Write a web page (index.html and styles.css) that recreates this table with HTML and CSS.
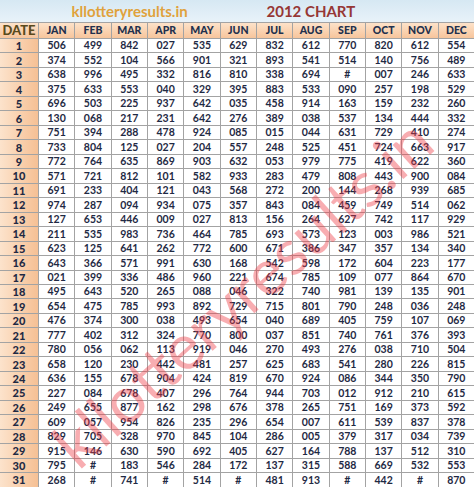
FILE: index.html
```html
<!DOCTYPE html>
<html lang="en">
<head>
<meta charset="utf-8">
<title>2012 Chart</title>
<link rel="stylesheet" href="styles.css">
</head>
<body>
<div class="sheet">
  <div class="title">
    <span class="site">kllotteryresults.in</span>
    <span class="chart">2012 CHART</span>
  </div>
  <div class="grid">
    <b class="hd date">DATE</b><b class="hd">JAN</b><b class="hd">FEB</b><b class="hd">MAR</b><b class="hd">APR</b><b class="hd">MAY</b><b class="hd">JUN</b><b class="hd">JUL</b><b class="hd">AUG</b><b class="hd">SEP</b><b class="hd">OCT</b><b class="hd">NOV</b><b class="hd">DEC</b>
    <b class="d">1</b><span>506</span><span>499</span><span>842</span><span>027</span><span>535</span><span>629</span><span>832</span><span>612</span><span>770</span><span>820</span><span>612</span><span>554</span>
    <b class="d">2</b><span>374</span><span>552</span><span>104</span><span>566</span><span>901</span><span>321</span><span>893</span><span>541</span><span>514</span><span>140</span><span>756</span><span>489</span>
    <b class="d">3</b><span>638</span><span>996</span><span>495</span><span>332</span><span>816</span><span>810</span><span>338</span><span>694</span><span>#</span><span>007</span><span>246</span><span>633</span>
    <b class="d">4</b><span>375</span><span>633</span><span>553</span><span>040</span><span>329</span><span>395</span><span>883</span><span>533</span><span>090</span><span>257</span><span>198</span><span>529</span>
    <b class="d">5</b><span>696</span><span>503</span><span>225</span><span>937</span><span>642</span><span>035</span><span>458</span><span>914</span><span>163</span><span>159</span><span>232</span><span>260</span>
    <b class="d">6</b><span>130</span><span>068</span><span>217</span><span>231</span><span>642</span><span>276</span><span>389</span><span>038</span><span>537</span><span>134</span><span>444</span><span>332</span>
    <b class="d">7</b><span>751</span><span>394</span><span>288</span><span>478</span><span>924</span><span>085</span><span>015</span><span>044</span><span>631</span><span>729</span><span>410</span><span>274</span>
    <b class="d">8</b><span>733</span><span>804</span><span>125</span><span>027</span><span>204</span><span>557</span><span>248</span><span>525</span><span>451</span><span>724</span><span>663</span><span>917</span>
    <b class="d">9</b><span>772</span><span>764</span><span>635</span><span>869</span><span>903</span><span>632</span><span>053</span><span>979</span><span>775</span><span>419</span><span>622</span><span>360</span>
    <b class="d">10</b><span>571</span><span>721</span><span>812</span><span>101</span><span>582</span><span>933</span><span>283</span><span>479</span><span>808</span><span>443</span><span>900</span><span>084</span>
    <b class="d">11</b><span>691</span><span>233</span><span>404</span><span>121</span><span>043</span><span>568</span><span>272</span><span>200</span><span>144</span><span>268</span><span>939</span><span>685</span>
    <b class="d">12</b><span>974</span><span>287</span><span>094</span><span>934</span><span>075</span><span>357</span><span>843</span><span>084</span><span>459</span><span>749</span><span>514</span><span>062</span>
    <b class="d">13</b><span>127</span><span>653</span><span>446</span><span>009</span><span>027</span><span>813</span><span>156</span><span>264</span><span>627</span><span>742</span><span>117</span><span>929</span>
    <b class="d">14</b><span>211</span><span>535</span><span>983</span><span>736</span><span>464</span><span>785</span><span>693</span><span>573</span><span>123</span><span>003</span><span>986</span><span>521</span>
    <b class="d">15</b><span>623</span><span>125</span><span>641</span><span>262</span><span>772</span><span>600</span><span>671</span><span>386</span><span>347</span><span>357</span><span>134</span><span>340</span>
    <b class="d">16</b><span>643</span><span>366</span><span>571</span><span>991</span><span>630</span><span>168</span><span>542</span><span>598</span><span>172</span><span>604</span><span>223</span><span>177</span>
    <b class="d">17</b><span>021</span><span>399</span><span>336</span><span>486</span><span>960</span><span>221</span><span>674</span><span>785</span><span>109</span><span>077</span><span>864</span><span>670</span>
    <b class="d">18</b><span>495</span><span>643</span><span>520</span><span>265</span><span>088</span><span>046</span><span>322</span><span>740</span><span>981</span><span>139</span><span>135</span><span>901</span>
    <b class="d">19</b><span>654</span><span>475</span><span>785</span><span>993</span><span>892</span><span>729</span><span>715</span><span>801</span><span>790</span><span>248</span><span>036</span><span>248</span>
    <b class="d">20</b><span>476</span><span>374</span><span>300</span><span>038</span><span>493</span><span>654</span><span>040</span><span>689</span><span>405</span><span>759</span><span>107</span><span>069</span>
    <b class="d">21</b><span>777</span><span>402</span><span>312</span><span>324</span><span>770</span><span>800</span><span>037</span><span>851</span><span>740</span><span>761</span><span>376</span><span>393</span>
    <b class="d">22</b><span>780</span><span>056</span><span>062</span><span>113</span><span>919</span><span>046</span><span>270</span><span>493</span><span>276</span><span>038</span><span>710</span><span>504</span>
    <b class="d">23</b><span>658</span><span>120</span><span>230</span><span>442</span><span>481</span><span>257</span><span>625</span><span>683</span><span>541</span><span>280</span><span>226</span><span>815</span>
    <b class="d">24</b><span>636</span><span>155</span><span>678</span><span>904</span><span>424</span><span>819</span><span>670</span><span>924</span><span>086</span><span>344</span><span>350</span><span>790</span>
    <b class="d">25</b><span>227</span><span>084</span><span>678</span><span>407</span><span>296</span><span>764</span><span>944</span><span>703</span><span>012</span><span>912</span><span>210</span><span>615</span>
    <b class="d">26</b><span>249</span><span>655</span><span>877</span><span>162</span><span>298</span><span>676</span><span>378</span><span>265</span><span>751</span><span>169</span><span>373</span><span>592</span>
    <b class="d">27</b><span>609</span><span>057</span><span>954</span><span>826</span><span>235</span><span>296</span><span>654</span><span>007</span><span>611</span><span>539</span><span>837</span><span>378</span>
    <b class="d">28</b><span>829</span><span>705</span><span>328</span><span>970</span><span>845</span><span>104</span><span>286</span><span>005</span><span>379</span><span>317</span><span>034</span><span>739</span>
    <b class="d">29</b><span>915</span><span>146</span><span>630</span><span>590</span><span>692</span><span>405</span><span>627</span><span>164</span><span>788</span><span>137</span><span>512</span><span>310</span>
    <b class="d">30</b><span>795</span><span>#</span><span>183</span><span>546</span><span>284</span><span>172</span><span>137</span><span>315</span><span>588</span><span>669</span><span>532</span><span>553</span>
    <b class="d">31</b><span>268</span><span>#</span><span>741</span><span>#</span><span>514</span><span>#</span><span>481</span><span>913</span><span>#</span><span>442</span><span>#</span><span>870</span>
  </div>
  <div class="watermark">kllotteryresults.in</div>
</div>
</body>
</html>
```

FILE: styles.css
```css
html, body {
  margin: 0;
  padding: 0;
  background: #ffffff;
}

.sheet {
  position: relative;
  width: 474px;
  height: 487px;
  overflow: hidden;
  font-family: Lato, "Liberation Sans", sans-serif;
}

.title {
  display: grid;
  grid-template-columns: 39px repeat(12, 1fr);
  height: 22px;
  align-items: center;
  background: linear-gradient(#d6e8f3, #e8f2f9);
  font-weight: 700;
  font-size: 15px;
}

.site {
  grid-column: 2 / 7;
  text-align: center;
  color: #e0a23c;
}

.chart {
  grid-column: 7 / 12;
  text-align: center;
  color: #963735;
}

.grid {
  display: grid;
  grid-template-columns: 38px repeat(12, 1fr);
  grid-template-rows: 15px repeat(31, 13.47px);
  gap: 1px;
  background: #a3a3a3;
  border-top: 1px solid #a3a3a3;
  font-weight: 700;
  font-size: 10.5px;
  color: #1f2a44;
}

.grid span,
.grid b {
  display: flex;
  align-items: center;
  justify-content: center;
  line-height: 1;
}

.grid span {
  background: #ffffff;
}

.hd {
  background: linear-gradient(#fde2c9, #f7c59c);
  color: #22304d;
}

.hd.date {
  font-size: 13px;
  color: #5a4a1c;
}

.d {
  background: linear-gradient(to right, #fce3cc, #f6c094);
  color: #1f2a44;
  font-size: 11px;
}

.watermark {
  position: absolute;
  left: 242px;
  top: 292px;
  transform: translate(-50%, -50%) rotate(-42deg);
  white-space: nowrap;
  font-size: 64px;
  line-height: 1;
  font-weight: 400;
  color: rgba(238, 60, 70, 0.42);
  pointer-events: none;
}
```
